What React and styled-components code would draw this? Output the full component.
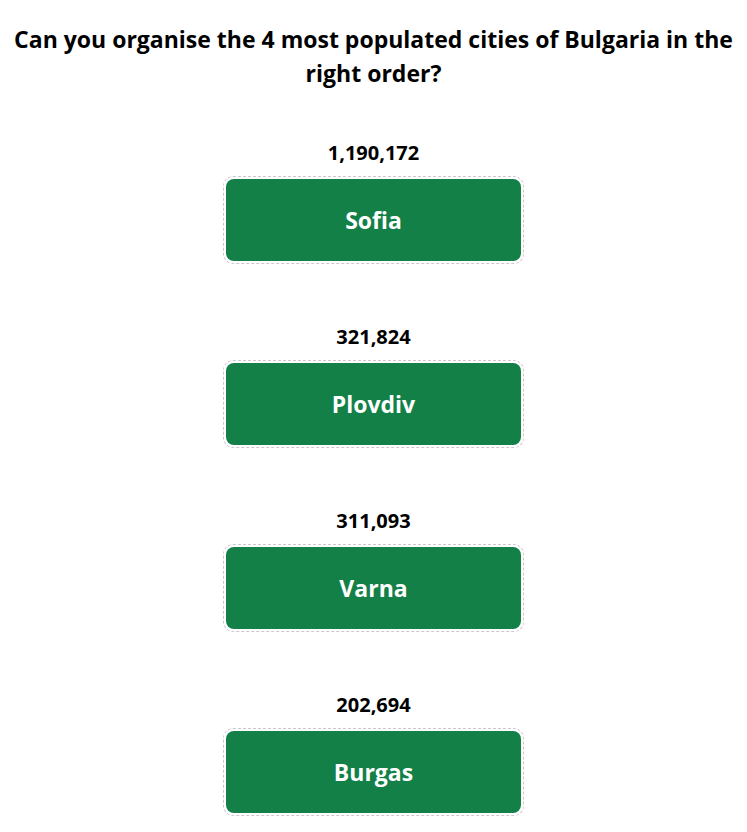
import React from 'react';
import styled, { createGlobalStyle } from 'styled-components';

const GlobalStyle = createGlobalStyle`
  body {
    margin: 0;
    background: #ffffff;
    font-family: 'Open Sans', 'Noto Sans', 'Liberation Sans', sans-serif;
    color: #000000;
  }
`;

const Page = styled.main`
  display: flex;
  flex-direction: column;
  align-items: center;
  padding: 22px 6px 0;
`;

const Title = styled.h2`
  margin: 0 0 51px;
  max-width: 740px;
  font-size: 23px;
  line-height: 34px;
  font-weight: 700;
  text-align: center;
`;

const List = styled.ol`
  display: flex;
  flex-direction: column;
  gap: 61px;
  margin: 0;
  padding: 0;
  list-style: none;
`;

const Item = styled.li`
  display: flex;
  flex-direction: column;
  align-items: center;
  gap: 11px;
`;

const Population = styled.span`
  font-size: 20px;
  line-height: 24px;
  font-weight: 700;
`;

const Slot = styled.div`
  width: 295px;
  padding: 2px;
  border: 1px dashed #c9c9c9;
  border-radius: 10px;
`;

const City = styled.button`
  display: flex;
  align-items: center;
  justify-content: center;
  width: 100%;
  height: 82px;
  border: none;
  border-radius: 8px;
  background: #138048;
  color: #ffffff;
  font-family: inherit;
  font-size: 23px;
  font-weight: 700;
  cursor: grab;
`;

const cities = [
  { name: 'Sofia', population: '1,190,172' },
  { name: 'Plovdiv', population: '321,824' },
  { name: 'Varna', population: '311,093' },
  { name: 'Burgas', population: '202,694' },
];

const App = () => (
  <>
    <GlobalStyle />
    <Page>
      <Title>Can you organise the 4 most populated cities of Bulgaria in the right order?</Title>
      <List>
        {cities.map((c) => (
          <Item key={c.name}>
            <Population>{c.population}</Population>
            <Slot>
              <City>{c.name}</City>
            </Slot>
          </Item>
        ))}
      </List>
    </Page>
  </>
);

export default App;
